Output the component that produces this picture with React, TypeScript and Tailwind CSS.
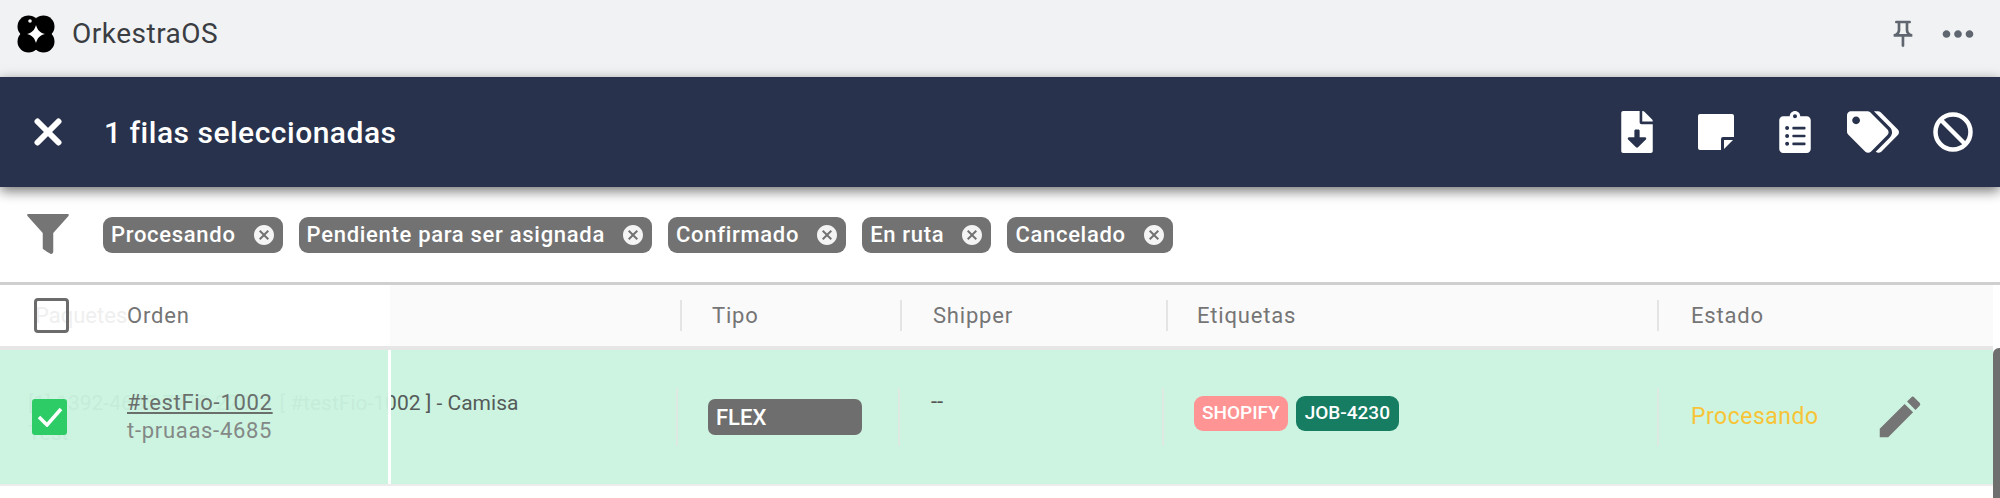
import * as React from 'react';
import { FaClipboardList, FaFileDownload, FaTags } from 'react-icons/fa';
import { MdCancel, MdEdit, MdMoreHoriz, MdOutlinePushPin } from 'react-icons/md';

const filters = ['Procesando', 'Pendiente para ser asignada', 'Confirmado', 'En ruta', 'Cancelado'];

function Logo() {
  return (
    <svg viewBox="0 0 38 38" className="w-[38px] h-[38px] shrink-0">
      <circle cx="11.5" cy="11.5" r="11" fill="#000" />
      <circle cx="26.5" cy="11.5" r="11" fill="#000" />
      <circle cx="11.5" cy="26.5" r="11" fill="#000" />
      <circle cx="26.5" cy="26.5" r="11" fill="#000" />
      <circle cx="19" cy="19" r="15.500" fill="#000" />
      <circle cx="13" cy="6" r="1.8" fill="#f1f2f4" />
      <path d="M19 10c1.500 5 3.500 7.500 9 9-5.500 1.500-7.500 4-9 9-1.500-5-3.500-7.500-9-9 5.500-1.500 7.500-4 9-9z" fill="#fff" />
    </svg>
  );
}

function CloseIcon() {
  return (
    <svg viewBox="0 0 28 28" className="w-[28px] h-[28px]" fill="none" stroke="#fff" strokeWidth="6" strokeLinecap="round">
      <path d="M3.500 3.500l21 21M24.500 3.500l-21 21" />
    </svg>
  );
}

function StickyNote() {
  return (
    <svg viewBox="0 0 36 36" className="w-[36px] h-[36px]" fill="#fff">
      <path d="M2 0h32a2 2 0 0 1 2 2v21H25a2 2 0 0 0-2 2v11H2a2 2 0 0 1-2-2V2a2 2 0 0 1 2-2z" />
      <path d="M26 26h9l-9 9z" />
    </svg>
  );
}

function BlockIcon() {
  return (
    <svg viewBox="0 0 40 40" className="w-[40px] h-[40px]" fill="none" stroke="#fff" strokeWidth="4.5">
      <circle cx="20" cy="20" r="17.500" />
      <path d="M8 8l24 24" />
    </svg>
  );
}

function FilterChip({ label }: { label: string }) {
  return (
    <div className="flex items-center h-[36px] pl-[8px] pr-[7px] gap-[16px] rounded-[9px] bg-[#727272] text-white text-[22px] tracking-[0.7px] font-medium">
      <span className="whitespace-nowrap">{label}</span>
      <MdCancel size={24} color="#f4f4f4" />
    </div>
  );
}

function HeaderCell({ label, width, pad }: { label: string; width: string; pad: string }) {
  return (
    <div className={`flex items-center h-full ${width}`}>
      <div className={`flex items-center h-[31px] border-l-2 border-[#e4e4e4] ${pad}`}>
        <span>{label}</span>
      </div>
    </div>
  );
}

export default function App() {
  return (
    <div className="relative h-[498px] w-[2000px] overflow-hidden bg-white font-[Roboto,sans-serif]">
      {/* App title bar */}
      <div className="flex items-center justify-between h-[77px] bg-[#f1f2f4] pl-[17px] pr-[19px] pb-[10px]">
        <div className="flex items-center gap-[17px]">
          <Logo />
          <span className="text-[28px] tracking-[0.5px] text-[#3a3d42]">OrkestraOS</span>
        </div>
        <div className="flex items-center gap-[16px] text-[#5f6670]">
          <MdOutlinePushPin size={32} />
          <MdMoreHoriz size={46} />
        </div>
      </div>

      {/* Selection toolbar */}
      <div className="relative z-10 flex items-center justify-between h-[110px] bg-[#28324c] shadow-[0_4px_12px_rgba(0,0,0,0.55)] pl-[34px] pr-[27px] text-white">
        <div className="flex items-center gap-[42px]">
          <CloseIcon />
          <span className="text-[30px] tracking-[0.5px] font-medium">1 filas seleccionadas</span>
        </div>
        <div className="flex items-center">
          <FaFileDownload size={42} />
          <div className="ml-[40px]">
            <StickyNote />
          </div>
          <FaClipboardList size={42} className="ml-[40px]" />
          <FaTags size={52} className="ml-[31px]" />
          <div className="ml-[34px]">
            <BlockIcon />
          </div>
        </div>
      </div>

      {/* Active filters */}
      <div className="flex items-center h-[98px] border-b-[3px] border-[#cfcfcf] pl-[27px] gap-[34px]">
        <svg viewBox="0 0 40 40" className="w-[42px] h-[42px] shrink-0" fill="#757575">
          <path d="M1 0h38c1 0 1 1 .5 2L25 18v18c0 1-1 2-2 2-1 0-7-4-8-5v-15L.5 2C0 1 0 0 1 0z" />
        </svg>
        <div className="flex items-center gap-[16px]">
          {filters.map((f) => (
            <FilterChip key={f} label={f} />
          ))}
        </div>
      </div>

      {/* Table header */}
      <div className="relative flex items-center h-[65px] w-[1993px] bg-[#fafafa] border-b-[4px] border-[#e6e6e6] text-[22px] tracking-[0.8px] text-[#757575]">
        <div className="w-[680px] shrink-0" />
        <HeaderCell label="Tipo" width="w-[220px]" pad="pl-[30px]" />
        <HeaderCell label="Shipper" width="w-[266px]" pad="pl-[31px]" />
        <HeaderCell label="Etiquetas" width="w-[491px]" pad="pl-[29px]" />
        <HeaderCell label="Estado" width="w-[336px]" pad="pl-[32px]" />
        <div className="absolute left-0 top-0 flex items-center h-full w-[390px] bg-white pl-[34px]">
          <span className="absolute left-[35px] tracking-normal text-[#efefef]">Paquetes</span>
          <div className="relative w-[35px] h-[35px] rounded-[4px] border-[3px] border-[#6b6b6b]" />
          <span className="relative ml-[58px]">Orden</span>
        </div>
      </div>

      {/* Selected row */}
      <div className="relative flex items-center h-[136px] w-[1993px] bg-[#cdf4e1] border-b-[2px] border-[#ececec]">
        <div className="flex flex-col justify-center w-[676px] shrink-0 pl-[28px] h-[58px] text-[21px] leading-[30px] text-[#555b59] whitespace-nowrap">
          <span className="mt-[1px]">[1] 1392-4685-7710-22011 [ #testFio-1002 ] - Camisa</span>
          <span>Test</span>
        </div>
        <div className="w-[222px] h-[58px] border-l-2 border-[#dfe9e4] pl-[30px] flex items-center">
          <div className="flex items-center w-[154px] h-[36px] rounded-[7px] bg-[#6e6e6e] pl-[8px] text-[22px] font-medium text-white">FLEX</div>
        </div>
        <div className="w-[264px] h-[58px] border-l-2 border-[#dfe9e4] pl-[31px] text-[22px] leading-[28px] text-[#555]">--</div>
        <div className="w-[495px] h-[58px] border-l-2 border-[#dfe9e4] pl-[30px] flex items-start pt-[8px] gap-[8px] text-[19px] font-medium text-white">
          <span className="flex items-center h-[35px] px-[8px] rounded-[9px] bg-[#ff9494]">SHOPIFY</span>
          <span className="flex items-center h-[35px] px-[9px] rounded-[9px] bg-[#167d63]">JOB-4230</span>
        </div>
        <div className="flex items-center w-[336px] h-[58px] border-l-2 border-[#dfe9e4] pl-[32px]">
          <span className="w-[182px] text-[23px] tracking-[0.5px] text-[#f8c437]">Procesando</span>
          <MdEdit size={54} color="#757575" />
        </div>
        <div className="absolute left-0 top-0 flex items-center h-full w-[391px] bg-[#cbf3e0]/95 border-r-[3px] border-white pl-[32px]">
          <div className="flex items-center justify-center w-[35px] h-[36px] rounded-[3px] bg-[#2ecc67]">
            <svg viewBox="0 0 26 20" className="w-[26px] h-[20px]" fill="none" stroke="#fff" strokeWidth="3.500">
              <path d="M2 10l8 8L24 2" />
            </svg>
          </div>
          <div className="ml-[60px] flex flex-col text-[22px] tracking-[0.7px] leading-[28px]">
            <span className="text-[#6a6f6c] underline">#testFio-1002</span>
            <span className="text-[#848886]">t-pruaas-4685</span>
          </div>
        </div>
      </div>

      {/* Scrollbar thumb */}
      <div className="absolute right-0 top-[348px] bottom-0 w-[7px] rounded-tl-[6px] bg-[#6f6f6f]" />
    </div>
  );
}
